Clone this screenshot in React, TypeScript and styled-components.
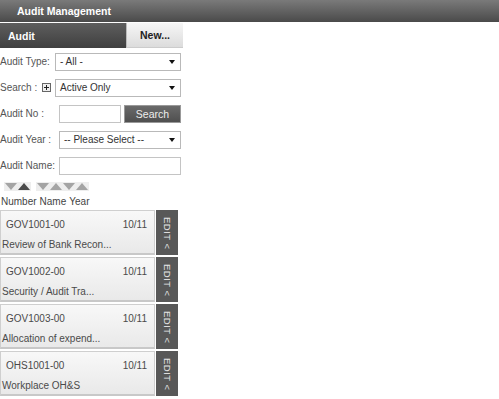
import React from "react";
import styled, { createGlobalStyle } from "styled-components";

const Global = createGlobalStyle`
  html, body { margin: 0; padding: 0; background: #fff; }
  body { font-family: "Liberation Sans", Arial, sans-serif; font-size: 10px; color: #4a4a4a; }
  * { box-sizing: border-box; }
`;

const Header = styled.div`
  height: 22px;
  width: 499px;
  background: linear-gradient(#7a7a7a, #4a4a4a);
  color: #fff;
  font-weight: bold;
  font-size: 10.5px;
  display: flex;
  align-items: center;
  padding-left: 17px;
`;

const Panel = styled.div`
  width: 183px;
`;

const TabBar = styled.div`
  display: flex;
  height: 25px;
  margin-top: 1px;
`;

const TabTitle = styled.div`
  flex: 1;
  background: linear-gradient(#5e5e5e, #3f3f3f);
  color: #fff;
  font-weight: bold;
  font-size: 10.5px;
  display: flex;
  align-items: center;
  padding-left: 8px;
`;

const NewButton = styled.div`
  width: 57px;
  background: linear-gradient(#f6f6f6, #dcdcdc);
  border-left: 1px solid #bbb;
  border-bottom: 1px solid #ccc;
  color: #222;
  font-weight: bold;
  font-size: 10.5px;
  display: flex;
  align-items: center;
  justify-content: center;
`;

const Form = styled.div`
  display: flex;
  flex-direction: column;
  gap: 8.5px;
  padding-top: 5px;
  padding-right: 2px;
`;

const Row = styled.div`
  display: flex;
  align-items: center;
  height: 17.5px;
`;

const Label = styled.div<{ $w: number }>`
  width: ${(p) => p.$w}px;
  white-space: nowrap;
  color: #555;
  display: flex;
  align-items: center;
`;

const PlusBox = styled.span`
  display: inline-block;
  width: 9px;
  height: 9px;
  border: 1px solid #666;
  background: #eee;
  margin-left: 5px;
  position: relative;
  &::before { content: ""; position: absolute; left: 1px; right: 1px; top: 3px; height: 1px; background: #222; }
  &::after { content: ""; position: absolute; top: 1px; bottom: 1px; left: 3px; width: 1px; background: #222; }
`;

const Select = styled.div`
  flex: 1;
  height: 100%;
  border: 1px solid #b9b9b9;
  background: #fff;
  display: flex;
  align-items: center;
  padding-left: 4px;
  padding-right: 5px;
  color: #333;
  justify-content: space-between;
`;

const Caret = styled.span`
  width: 0;
  height: 0;
  border-left: 3.5px solid transparent;
  border-right: 3.5px solid transparent;
  border-top: 4px solid #111;
`;

const Input = styled.div<{ $w?: number }>`
  ${(p) => (p.$w ? `width: ${p.$w}px;` : "flex: 1;")}
  height: 100%;
  border: 1px solid #c4c4c4;
  background: #fff;
`;

const SearchBtn = styled.div`
  width: 57px;
  height: 100%;
  margin-left: 3px;
  background: linear-gradient(#6a6a6a, #4f4f4f);
  border: 1px solid #999;
  color: #eee;
  font-size: 10.5px;
  display: flex;
  align-items: center;
  justify-content: center;
`;

const Sorters = styled.div`
  display: flex;
  gap: 5px;
  padding-left: 4px;
  margin-top: 7px;
`;

const Tri = styled.span<{ $up?: boolean; $dark?: boolean }>`
  width: 0;
  height: 0;
  border-left: 6px solid transparent;
  border-right: 6px solid transparent;
  ${(p) => (p.$up ? "border-bottom" : "border-top")}: 7px solid ${(p) => (p.$dark ? "#4a4a4a" : "#a4a4a4")};
`;

const SortGroup = styled.div`
  display: flex;
  gap: 1px;
  background: #eee;
  padding: 1px;
`;

const ColHeads = styled.div`
  display: flex;
  gap: 3px;
  color: #444;
  margin-top: 5px;
  padding-left: 1px;
`;

const List = styled.div`
  display: flex;
  flex-direction: column;
  gap: 2px;
  margin-top: 3px;
`;

const Card = styled.div`
  display: flex;
  height: 45px;
  gap: 1px;
`;

const CardBody = styled.div`
  width: 155px;
  background: linear-gradient(#f8f8f8, #e9e9e9);
  border: 1px solid #cfcfcf;
  border-bottom: 2px solid #c8c8c8;
  display: flex;
  flex-direction: column;
`;

const CardTop = styled.div`
  display: flex;
  justify-content: space-between;
  padding: 8px 7px 0 5px;
`;

const CardName = styled.div`
  margin-top: auto;
  padding: 0 0 3px 1px;
  white-space: nowrap;
`;

const EditTab = styled.div`
  width: 22px;
  background: #585858;
  color: #e6e6e6;
  display: flex;
  justify-content: center;
  padding-top: 7px;
`;

const EditText = styled.span`
  writing-mode: vertical-rl;
  font-size: 9.5px;
  letter-spacing: 0.5px;
`;

const cards = [
  { no: "GOV1001-00", yr: "10/11", name: "Review of Bank Recon..." },
  { no: "GOV1002-00", yr: "10/11", name: "Security / Audit Tra..." },
  { no: "GOV1003-00", yr: "10/11", name: "Allocation of expend..." },
  { no: "OHS1001-00", yr: "10/11", name: "Workplace OH&S" },
];

export default function App() {
  return (
    <>
      <Global />
      <Header>Audit Management</Header>
      <Panel>
        <TabBar>
          <TabTitle>Audit</TabTitle>
          <NewButton>New...</NewButton>
        </TabBar>
        <Form>
          <Row>
            <Label $w={55}>Audit Type:</Label>
            <Select>- All -<Caret /></Select>
          </Row>
          <Row>
            <Label $w={55}>Search :<PlusBox /></Label>
            <Select>Active Only<Caret /></Select>
          </Row>
          <Row>
            <Label $w={59}>Audit No :</Label>
            <Input $w={62} />
            <SearchBtn>Search</SearchBtn>
          </Row>
          <Row>
            <Label $w={59}>Audit Year :</Label>
            <Select>-- Please Select --<Caret /></Select>
          </Row>
          <Row>
            <Label $w={59}>Audit Name:</Label>
            <Input />
          </Row>
        </Form>
        <Sorters>
          <SortGroup><Tri /><Tri $up $dark /></SortGroup>
          <SortGroup><Tri /><Tri $up /><Tri /><Tri $up /></SortGroup>
        </Sorters>
        <ColHeads><span>Number</span><span>Name</span><span>Year</span></ColHeads>
        <List>
          {cards.map((c) => (
            <Card key={c.no}>
              <CardBody>
                <CardTop><span>{c.no}</span><span>{c.yr}</span></CardTop>
                <CardName>{c.name}</CardName>
              </CardBody>
              <EditTab><EditText>EDIT &lt;</EditText></EditTab>
            </Card>
          ))}
        </List>
      </Panel>
    </>
  );
}
